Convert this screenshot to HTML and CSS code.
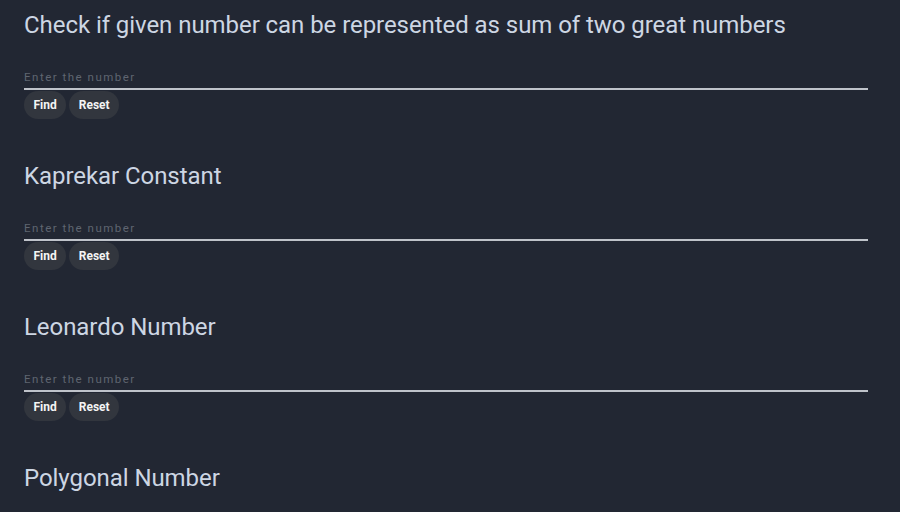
FILE: index.html
```html
<!DOCTYPE html>
<html>
<head>
<meta charset="utf-8">
<link rel="stylesheet" href="styles.css">
</head>
<body>
<main class="page">
  <section class="tool">
    <h2 class="tool-title">Check if given number can be represented as sum of two great numbers</h2>
    <input class="tool-input" type="text" placeholder="Enter the number">
    <div class="tool-actions">
      <button class="btn">Find</button>
      <button class="btn">Reset</button>
    </div>
  </section>
  <section class="tool">
    <h2 class="tool-title">Kaprekar Constant</h2>
    <input class="tool-input" type="text" placeholder="Enter the number">
    <div class="tool-actions">
      <button class="btn">Find</button>
      <button class="btn">Reset</button>
    </div>
  </section>
  <section class="tool">
    <h2 class="tool-title">Leonardo Number</h2>
    <input class="tool-input" type="text" placeholder="Enter the number">
    <div class="tool-actions">
      <button class="btn">Find</button>
      <button class="btn">Reset</button>
    </div>
  </section>
  <section class="tool">
    <h2 class="tool-title">Polygonal Number</h2>
    <input class="tool-input" type="text" placeholder="Enter the number">
    <div class="tool-actions">
      <button class="btn">Find</button>
      <button class="btn">Reset</button>
    </div>
  </section>
</main>
</body>
</html>
```
FILE: styles.css
```css
html, body {
  margin: 0;
  padding: 0;
  background: #222733;
  height: 100%;
  overflow: hidden;
}
.page {
  padding: 9px 32px 0 24px;
  display: flex;
  flex-direction: column;
  gap: 41px;
  font-family: Roboto, "Open Sans", sans-serif;
}
.tool {
  display: flex;
  flex-direction: column;
}
.tool-title {
  margin: 0;
  font-size: 24px;
  font-weight: 400;
  line-height: 32px;
  color: #cdd6e3;
  letter-spacing: -0.06px;
}
.tool-input {
  margin-top: 24px;
  width: 844px;
  box-sizing: border-box;
  height: 25px;
  background: transparent;
  border: none;
  border-bottom: 2px solid #bfc3ca;
  padding: 0;
  font-family: Roboto, sans-serif;
  font-size: 11.5px;
  letter-spacing: 1.5px;
  color: #ddd;
  outline: none;
}
.tool-input::placeholder {
  color: #5f6570;
}
.tool-actions {
  display: flex;
  gap: 3px;
  margin-top: 1px;
}
.btn {
  height: 28px;
  border: none;
  border-radius: 14px;
  background: #32363e;
  color: #f4f4f4;
  font-family: Roboto, sans-serif;
  font-size: 12px;
  font-weight: 700;
  padding: 0 9.5px;
}
```
